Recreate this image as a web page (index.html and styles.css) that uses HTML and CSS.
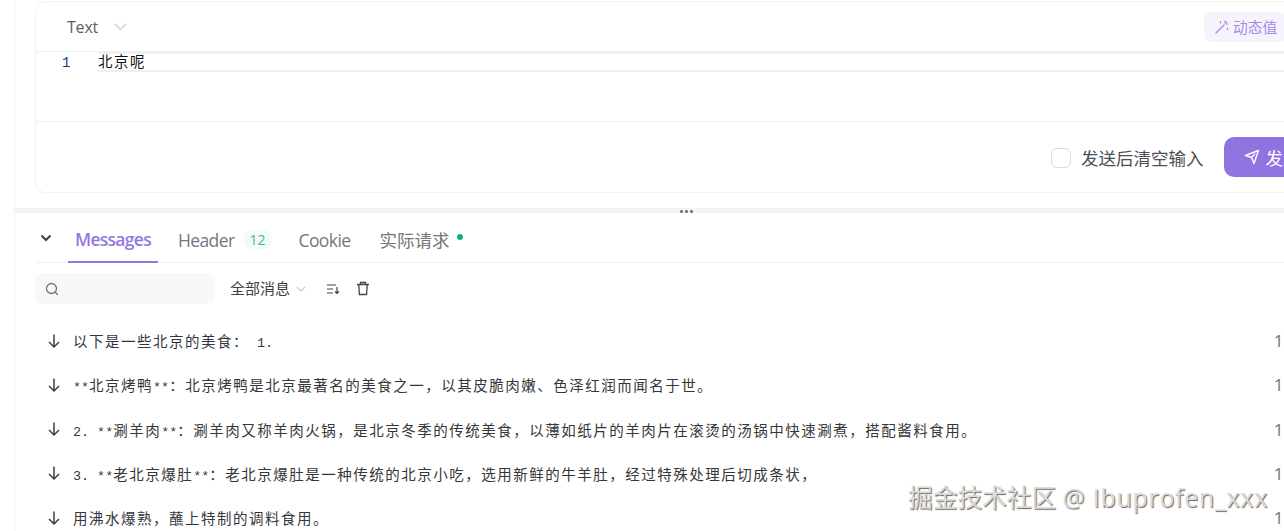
FILE: index.html
```html
<!DOCTYPE html>
<html lang="zh-CN">
<head>
    <meta charset="UTF-8">
    <meta name="viewport" content="width=device-width, initial-scale=1.0">
    <title>Messages</title>
    <link rel="stylesheet" href="styles.css">
</head>
<body>
    <div class="page">
        <div class="request-panel">
            <div class="card">
                <div class="card-header">
                    <div class="type-select">
                        <span>Text</span>
                        <svg class="chevron-light" width="13" height="8" viewBox="0 0 13 8"><path d="M1 1l5.5 5.5L12 1"/></svg>
                    </div>
                    <button class="dynamic-btn">
                        <svg width="16" height="16" viewBox="0 0 16 16" fill="none" stroke="#a48ce6" stroke-width="1.2" stroke-linecap="round"><path d="M2 14L10 6"/><path d="M11 2v2M14 5h-2M13.5 9v1.6M6.5 2.5v1.4M12.6 2.8l-.8.8"/></svg>
                        <span>动态值</span>
                    </button>
                </div>
                <div class="editor">
                    <div class="line-number">1</div>
                    <div class="line-text">北京呢</div>
                </div>
                <div class="card-footer">
                    <label class="clear-check">
                        <span class="checkbox"></span>
                        <span class="clear-label">发送后清空输入</span>
                    </label>
                    <button class="send-btn">
                        <svg width="16" height="16" viewBox="0 0 16 16" fill="none" stroke="#fff" stroke-width="1.4" stroke-linejoin="round"><path d="M1.5 6.5L14.5 1.5 10 14.5 7.5 8.5z"/><path d="M7.5 8.5L11 5"/></svg>
                        <span>发送</span>
                    </button>
                </div>
            </div>
        </div>

        <div class="splitter"><span></span><span></span><span></span></div>

        <div class="response-panel">
            <div class="tabs">
                <svg class="collapse" width="12" height="8" viewBox="0 0 12 8"><path d="M1.5 1.5L6 6l4.5-4.5"/></svg>
                <div class="tab active">Messages</div>
                <div class="tab">Header<span class="badge">12</span></div>
                <div class="tab">Cookie</div>
                <div class="tab tab-cjk">实际请求<span class="dot"></span></div>
            </div>

            <div class="toolbar">
                <div class="search">
                    <svg width="16" height="16" viewBox="0 0 16 16" fill="none" stroke="#777" stroke-width="1.3" stroke-linecap="round"><circle cx="7.5" cy="7.5" r="5"/><path d="M11.2 11.2l2.3 2.3"/></svg>
                </div>
                <div class="filter">
                    <span class="filter-label">全部消息</span>
                    <svg class="chevron-light" width="10" height="6" viewBox="0 0 10 6"><path d="M1 1l4 4 4-4"/></svg>
                </div>
                <svg class="tool" width="14" height="12" viewBox="0 0 14 12" fill="none" stroke="#444" stroke-width="1.2"><path d="M1 2h9M1 6h6M1 10h6"/><path d="M11 4v6.5M9 8.5l2 2 2-2"/></svg>
                <svg class="tool" width="14" height="15" viewBox="0 0 14 15" fill="none" stroke="#444" stroke-width="1.3"><path d="M1 3.5h12M4.5 3.5V1.5h5v2"/><path d="M2.8 3.5l.6 10h7.2l.6-10"/></svg>
            </div>

            <div class="messages">
                <div class="message">
                    <svg class="arrow" width="14" height="16" viewBox="0 0 14 16"><path d="M7 1.5v12.5M2 9l5 5 5-5"/></svg>
                    <div class="message-text">以下是一些北京的美食<span class="colon">：</span><span class="lat"> 1.</span></div>
                    <div class="message-time">16:32:05</div>
                </div>
                <div class="message">
                    <svg class="arrow" width="14" height="16" viewBox="0 0 14 16"><path d="M7 1.5v12.5M2 9l5 5 5-5"/></svg>
                    <div class="message-text"><span class="lat">**</span>北京烤鸭<span class="lat">**</span><span class="colon">：</span>北京烤鸭是北京最著名的美食之一，以其皮脆肉嫩、色泽红润而闻名于世。</div>
                    <div class="message-time">16:32:05</div>
                </div>
                <div class="message">
                    <svg class="arrow" width="14" height="16" viewBox="0 0 14 16"><path d="M7 1.5v12.5M2 9l5 5 5-5"/></svg>
                    <div class="message-text"><span class="lat">2. **</span>涮羊肉<span class="lat">**</span><span class="colon">：</span>涮羊肉又称羊肉火锅，是北京冬季的传统美食，以薄如纸片的羊肉片在滚烫的汤锅中快速涮煮，搭配酱料食用。</div>
                    <div class="message-time">16:32:06</div>
                </div>
                <div class="message">
                    <svg class="arrow" width="14" height="16" viewBox="0 0 14 16"><path d="M7 1.5v12.5M2 9l5 5 5-5"/></svg>
                    <div class="message-text"><span class="lat">3. **</span>老北京爆肚<span class="lat">**</span><span class="colon">：</span>老北京爆肚是一种传统的北京小吃，选用新鲜的牛羊肚，经过特殊处理后切成条状，</div>
                    <div class="message-time">16:32:06</div>
                </div>
                <div class="message">
                    <svg class="arrow" width="14" height="16" viewBox="0 0 14 16"><path d="M7 1.5v12.5M2 9l5 5 5-5"/></svg>
                    <div class="message-text">用沸水爆熟，蘸上特制的调料食用。</div>
                    <div class="message-time">16:32:07</div>
                </div>
            </div>
        </div>

        <div class="watermark">掘金技术社区 <span class="watermark-name">@ Ibuprofen_xxx</span></div>
    </div>
</body>
</html>
```

FILE: styles.css
```css
* {
    box-sizing: border-box;
}
html, body {
    height: 100%;
    margin: 0;
    overflow: hidden;
}
body {
    background: #fff;
    font-family: "Open Sans", "Noto Sans CJK SC", sans-serif;
    color: #4a4f57;
}
svg {
    display: block;
    flex: none;
}
.page {
    width: 1360px;
    height: 531px;
    margin-left: 14px;
    border-left: 1px solid #f2f3f5;
    overflow: hidden;
}
.request-panel {
    padding: 1px 0 0 20px;
    height: 193px;
}
.card {
    border: 1px solid #f2f2f3;
    border-right: none;
    border-radius: 10px;
    height: 192px;
    width: 1304px;
}
.card-header {
    display: flex;
    align-items: center;
    justify-content: space-between;
    height: 50px;
    padding: 0 51px 0 31px;
    border-bottom: 1px solid #f0f0f1;
}
.type-select {
    display: flex;
    align-items: center;
    gap: 16px;
    font-size: 16px;
    letter-spacing: -0.2px;
    color: #5c6066;
}
.chevron-light {
    fill: none;
    stroke: #c9cbd0;
    stroke-width: 1.2;
}
.dynamic-btn {
    display: flex;
    align-items: center;
    gap: 3px;
    height: 30px;
    width: 84px;
    padding: 0 0 0 10px;
    border: none;
    border-radius: 8px;
    background: #f6f3fd;
    color: #a48ce6;
    font-family: inherit;
    font-size: 14.7px;
}
.editor {
    display: flex;
    align-items: flex-start;
    height: 70px;
    border-bottom: 1px solid #f0f0f1;
}
.line-number {
    width: 62px;
    padding-left: 26px;
    padding-top: 2px;
    font-family: "Liberation Mono", monospace;
    font-size: 14px;
    line-height: 18px;
    color: #123f6e;
}
.line-text {
    flex: 1;
    height: 20px;
    border-top: 2px solid #efefef;
    border-bottom: 2px solid #efefef;
    font-family: "Noto Sans CJK SC", sans-serif;
    font-size: 14.5px;
    letter-spacing: 1.5px;
    line-height: 14px;
    color: #111;
}
.card-footer {
    display: flex;
    align-items: center;
    gap: 20px;
    height: 70px;
    padding-left: 1015px;
}
.clear-check {
    display: flex;
    align-items: center;
    gap: 10px;
    margin-top: 2px;
    font-size: 17.5px;
    white-space: nowrap;
}
.clear-label {
    margin-bottom: 2px;
}
.checkbox {
    width: 20px;
    height: 20px;
    border: 1px solid #dcdcdf;
    border-radius: 6px;
}
.send-btn {
    display: flex;
    align-items: center;
    gap: 6px;
    width: 110px;
    height: 40px;
    padding: 0 0 0 20px;
    border: none;
    border-radius: 10px;
    background: #8f74e0;
    color: #fff;
    font-family: inherit;
    font-size: 17.5px;
    white-space: nowrap;
}
.splitter {
    display: flex;
    justify-content: center;
    gap: 2px;
    align-items: flex-end;
    width: 1342px;
    height: 5px;
    margin-top: 15px;
    background: #f2f3f5;
}
.splitter span {
    width: 3px;
    height: 3px;
    border-radius: 50%;
    background: #66686c;
}
.response-panel {
    padding-left: 20px;
}
.tabs {
    display: flex;
    align-items: center;
    height: 50px;
    border-bottom: 1px solid #f0f0f1;
}
.collapse {
    fill: none;
    stroke: #3c3f44;
    stroke-width: 2;
    margin: 0 16px 0 5px;
}
.tab {
    display: flex;
    align-items: center;
    height: 50px;
    padding: 4px 7px 0;
    margin-right: 13px;
    font-size: 17.5px;
    letter-spacing: -0.6px;
    color: #72777e;
}
.tab.active {
    color: #9478e2;
    font-weight: 600;
    letter-spacing: -0.72px;
    border-bottom: 2px solid #9478e2;
}
.tab-cjk {
    margin-left: 2px;
    letter-spacing: 0;
}
.badge {
    margin-left: 9px;
    padding: 0 6px;
    border-radius: 8px;
    background: #f4fbf7;
    font-size: 14px;
    letter-spacing: 0;
    color: #45b889;
}
.dot {
    width: 6px;
    height: 6px;
    margin: 0 0 6px 8px;
    border-radius: 50%;
    background: #10b07a;
}
.toolbar {
    display: flex;
    align-items: center;
    height: 31px;
    margin-top: 10px;
}
.search {
    display: flex;
    align-items: center;
    width: 180px;
    height: 31px;
    padding-left: 9px;
    border-radius: 8px;
    background: #f8f8f9;
}
.filter {
    display: flex;
    align-items: center;
    gap: 6px;
    margin: 0 20px 0 15px;
    font-size: 15px;
    color: #3c3f44;
}
.filter-label {
    margin-bottom: 2px;
}
.tool {
    margin-right: 16px;
}
.messages {
    margin-top: 14.5px;
}
.message {
    display: flex;
    align-items: center;
    height: 44.25px;
    padding-left: 12px;
    width: 1306px;
}
.arrow {
    fill: none;
    stroke: #3c3f44;
    stroke-width: 1.5;
}
.message-text {
    flex: 1;
    margin-left: 12px;
    font-family: "Noto Sans CJK SC", sans-serif;
    font-size: 14.5px;
    letter-spacing: 1.5px;
    color: #33363b;
    white-space: pre;
}
.colon {
    font-family: "Noto Sans CJK TC", sans-serif;
}
.lat {
    font-family: "Liberation Mono", monospace;
    font-size: 13.4px;
    letter-spacing: 0;
}
.message-time {
    font-size: 17px;
    color: #6f747b;
}
.watermark {
    position: absolute;
    left: 908px;
    top: 478px;
    font-size: 24.7px;
    white-space: nowrap;
    color: #dcdcdc;
    text-shadow: 1px 1px 1px #666;
}
.watermark-name {
    letter-spacing: 0.85px;
}
```
